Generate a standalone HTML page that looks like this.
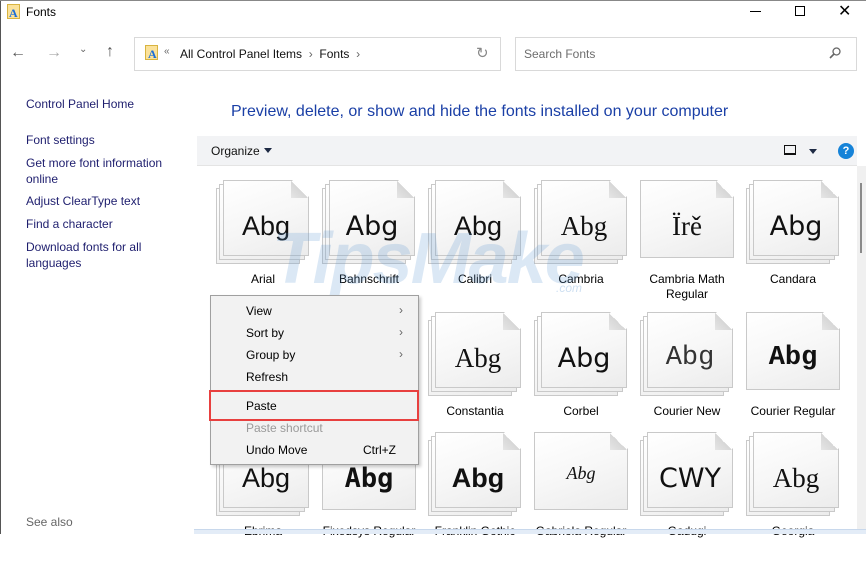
<!DOCTYPE html>
<html><head><meta charset="utf-8"><style>
*{margin:0;padding:0;box-sizing:border-box}
body{width:866px;height:534px;overflow:hidden;background:#fff;font-family:"Liberation Sans","DejaVu Sans",sans-serif;font-size:12px;color:#000;position:relative}
.a{position:absolute}
.side{color:#1e1e6e;font-size:12px;line-height:16px}
.page{position:absolute;background:linear-gradient(160deg,#fff 0%,#f7f7f7 50%,#ececec 100%);border:1px solid #c9c9c9;clip-path:polygon(0 0,calc(100% - 17px) 0,100% 17px,100% 100%,0 100%)}
.page:after{content:"";position:absolute;right:0;top:0;width:17px;height:17px;background:linear-gradient(225deg,#fff 50%,#d6d6d6 50%,#e6e6e6 100%)}
.tile{position:absolute;width:106px;height:130px}
.lbl{position:absolute;left:0;width:106px;text-align:center;font-size:12px;line-height:15px;color:#000}
.abg{position:absolute;left:0;right:0;text-align:center;color:#111}
.mi{position:absolute;left:35px;font-size:12px}
.ar{position:absolute;left:188px;color:#666;font-size:12px}
</style></head><body>
<div class="a" style="left:0;top:0;width:1px;height:534px;background:#555"></div>
<div class="a" style="left:0;top:0;width:866px;height:1px;background:#888"></div>
<div class="a" style="left:7px;top:4px;width:13px;height:15px;background:#fbe29a;border:1px solid #d8b440"></div>
<div class="a" style="left:9px;top:6px;font:bold 12px 'Liberation Serif',serif;color:#1a6ed8">A</div>
<div class="a" style="left:26px;top:5px;font-size:12px">Fonts</div>
<div class="a" style="left:750px;top:11px;width:11px;height:1px;background:#000"></div>
<div class="a" style="left:795px;top:6px;width:10px;height:10px;border:1px solid #000"></div>
<div class="a" style="left:838px;top:1px;font-size:16px;font-weight:300">✕</div>
<div class="a" style="left:10px;top:44px;font-size:16px;color:#555">←</div>
<div class="a" style="left:46px;top:44px;font-size:16px;color:#aaa">→</div>
<div class="a" style="left:79px;top:44px;font-size:10px;color:#666">⌄</div>
<div class="a" style="left:106px;top:43px;font-size:16px;color:#555">↑</div>
<div class="a" style="left:134px;top:37px;width:367px;height:34px;border:1px solid #d9d9d9"></div>
<div class="a" style="left:145px;top:45px;width:13px;height:15px;background:#fbe29a;border:1px solid #d8b440"></div>
<div class="a" style="left:148px;top:47px;font:bold 12px 'Liberation Serif',serif;color:#1a6ed8">A</div>
<div class="a" style="left:164px;top:46px;font-size:10px;color:#666">«</div>
<div class="a" style="left:180px;top:47px;font-size:12px;color:#111">All Control Panel Items&nbsp;&nbsp;<span style="color:#666">›</span>&nbsp;&nbsp;Fonts&nbsp;&nbsp;<span style="color:#666">›</span></div>
<div class="a" style="left:476px;top:44px;font-size:15px;color:#888">↻</div>
<div class="a" style="left:515px;top:37px;width:342px;height:34px;border:1px solid #d9d9d9"></div>
<div class="a" style="left:524px;top:47px;font-size:12px;color:#6d6d6d">Search Fonts</div>
<svg class="a" style="left:829px;top:47px" width="12" height="12"><circle cx="7.5" cy="4.5" r="3.5" fill="none" stroke="#666" stroke-width="1.3"/><line x1="5" y1="7" x2="1" y2="11" stroke="#666" stroke-width="1.6"/></svg>
<div class="a side" style="left:26px;top:96px">Control Panel Home</div>
<div class="a side" style="left:26px;top:132px">Font settings</div>
<div class="a side" style="left:26px;top:155px">Get more font information<br>online</div>
<div class="a side" style="left:26px;top:193px">Adjust ClearType text</div>
<div class="a side" style="left:26px;top:216px">Find a character</div>
<div class="a side" style="left:26px;top:239px">Download fonts for all<br>languages</div>
<div class="a" style="left:26px;top:515px;color:#666;font-size:12px">See also</div>
<div class="a" style="left:231px;top:103px;font-size:16px;color:#1a3fa6">Preview, delete, or show and hide the fonts installed on your computer</div>
<div class="a" style="left:197px;top:136px;width:660px;height:30px;background:#f2f3f5;border-bottom:1px solid #e4e4e4"></div>
<div class="a" style="left:211px;top:144px;font-size:12px;color:#111">Organize</div>
<div class="a" style="left:264px;top:148px;width:0;height:0;border-left:4px solid transparent;border-right:4px solid transparent;border-top:5px solid #1e2a44"></div>
<div class="a" style="left:784px;top:145px;width:12px;height:10px;border:1px solid #111;border-bottom-width:2px"></div>
<div class="a" style="left:809px;top:149px;width:0;height:0;border-left:4px solid transparent;border-right:4px solid transparent;border-top:5px solid #1e2a44"></div>
<div class="a" style="left:838px;top:143px;width:16px;height:16px;border-radius:50%;background:#1683d8;color:#fff;font-weight:bold;font-size:11px;text-align:center;line-height:16px">?</div>
<div class="a" style="left:857px;top:166px;width:9px;height:363px;background:#f0f0f0"></div>
<div class="a" style="left:860px;top:183px;width:2px;height:70px;background:#8a8a8a"></div>

<div id="grid"></div>

<div class="a" style="left:272px;top:218px;font:italic bold 72px 'Liberation Sans',sans-serif;color:rgba(90,150,210,0.22);letter-spacing:-2px">TipsMake</div>
<div class="a" style="left:556px;top:281px;font:italic 12px 'Liberation Sans',sans-serif;color:rgba(90,150,210,0.3)">.com</div>

<div class="a" style="left:194px;top:529px;width:672px;height:5px;background:#e3ecf7;border-top:1px solid #c8d8ec;z-index:5"></div>

<div class="a" style="left:210px;top:295px;width:209px;height:170px;background:#f2f2f2;border:1px solid #a0a0a0;box-shadow:2px 2px 3px rgba(0,0,0,.2)">
<div class="mi" style="top:8px">View</div><div class="ar" style="top:7px">›</div>
<div class="mi" style="top:30px">Sort by</div><div class="ar" style="top:29px">›</div>
<div class="mi" style="top:52px">Group by</div><div class="ar" style="top:51px">›</div>
<div class="mi" style="top:74px">Refresh</div>
<div class="mi" style="top:103px">Paste</div>
<div class="mi" style="top:125px;color:#9a9a9a">Paste shortcut</div>
<div class="mi" style="top:147px">Undo Move</div>
<div class="a" style="left:152px;top:147px">Ctrl+Z</div>
</div>
<div class="a" style="left:209px;top:390px;width:210px;height:31px;border:2px solid #e8403f"></div>

<script>
var tiles=[
[0,0,'Arial','Abg',"'Liberation Sans'",'',1],
[1,0,'Bahnschrift','Abg',"'DejaVu Sans'",'',1],
[2,0,'Calibri','Abg',"'Liberation Sans'",'',1],
[3,0,'Cambria','Abg',"'Liberation Serif'",'',1],
[4,0,'Cambria Math<br>Regular','Ïrě',"'Liberation Serif'",'',0],
[5,0,'Candara','Abg',"'DejaVu Sans'",'',1],
[2,1,'Constantia','Abg',"'Liberation Serif'",'',1],
[3,1,'Corbel','Abg',"'DejaVu Sans'",'',1],
[4,1,'Courier New','Abg',"'Liberation Mono'",'color:#333',1],
[5,1,'Courier Regular','Abg',"'Liberation Mono'",'font-weight:bold',0],
[0,2,'Ebrima','Abg',"'Liberation Sans'",'',1],
[1,2,'Fixedsys Regular','Abg',"'DejaVu Sans Mono'",'font-weight:bold',0],
[2,2,'Franklin Gothic','Abg',"'Liberation Sans'",'font-weight:bold',1],
[3,2,'Gabriola Regular','Abg',"'Liberation Serif'",'font-style:italic;font-size:18px',0],
[4,2,'Gadugi','CWY',"'DejaVu Sans'",'',1],
[5,2,'Georgia','Abg',"'Liberation Serif'",'',1]
];
var rows=[180,312,432],h='';
tiles.forEach(function(t){
 var x=216+t[0]*106,y=rows[t[1]],s='';
 if(t[6]){
  s+='<div class="page" style="left:0;top:8px;width:84px;height:76px"></div>';
  s+='<div class="page" style="left:3px;top:4px;width:86px;height:76px"></div>';
  s+='<div class="page" style="left:7px;top:0;width:86px;height:76px"></div>';
 } else {
  s+='<div class="page" style="left:0;top:0;width:94px;height:78px"></div>';
 }
 s+='<div class="abg" style="left:'+(t[6]?7:0)+'px;width:'+(t[6]?86:94)+'px;top:31px;font-family:'+t[4]+',sans-serif;font-size:27px;'+t[5]+'">'+t[3]+'</div>';
 s+='<div class="lbl" style="left:-6px;top:92px">'+t[2]+'</div>';
 h+='<div class="tile" style="left:'+x+'px;top:'+y+'px">'+s+'</div>';
});
document.getElementById('grid').innerHTML=h;
</script>
</body></html>
